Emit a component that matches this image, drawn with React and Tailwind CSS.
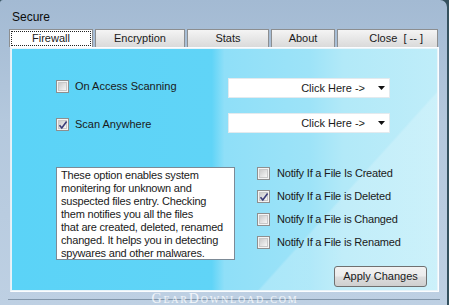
import React from 'react';

const TABS = [
  { label: 'Firewall', w: 'w-[84px]', selected: true },
  { label: 'Encryption', w: 'w-[90px]' },
  { label: 'Stats', w: 'w-[82px]' },
  { label: 'About', w: 'w-[64px]' },
  { label: 'Close  [ -- ]', w: 'w-[101px]', right: true },
];

const NOTIFY = [
  { label: 'Notify If a File Is Created', checked: false },
  { label: 'Notify If a File is Deleted', checked: true },
  { label: 'Notify If a File is Changed', checked: false },
  { label: 'Notify If a File is Renamed', checked: false },
];

function CheckBox({ checked }) {
  return (
    <span className="relative w-[13px] h-[13px] shrink-0 border border-[#8e8f8f] bg-[#f4f4f4] flex items-center justify-center">
      <span className="w-[9px] h-[9px] border border-[#c9c9c9] bg-[linear-gradient(135deg,#cbcbcb,#f6f6f6)]" />
      {checked && (
        <svg className="absolute left-[1px] top-[1px]" width="10" height="10" viewBox="0 0 10 10">
          <path d="M1.5 5.2 L3.8 8 L8.6 1.6" fill="none" stroke="#3a3c78" strokeWidth="1.6" />
        </svg>
      )}
    </span>
  );
}

function Dropdown() {
  return (
    <div className="w-[162px] h-[20px] bg-white border border-[#e3eaee] flex items-center justify-end pr-[4px]">
      <span className="text-[11px] text-[#1a1a1a] mr-[13px]">Click Here -&gt;</span>
      <svg width="7" height="4" viewBox="0 0 7 4">
        <path d="M0 0 H7 L3.5 4 Z" fill="#111" />
      </svg>
    </div>
  );
}

export default function App() {
  return (
    <div className="w-[449px] h-[305px] bg-[#35515e] overflow-hidden" style={{ fontFamily: '"Liberation Sans", Arial, sans-serif' }}>
      <div className="w-[447px] h-[305px] rounded-tr-[7px] rounded-tl-[3px] bg-[linear-gradient(180deg,#a3bad3_0%,#b4c8dd_40%,#bed0e3_100%)] flex flex-col">
        {/* title */}
        <div className="h-[29px] pl-[12px] pt-[10px] text-[12px] text-[#0c0c0c] leading-[14px]">Secure</div>

        {/* client */}
        <div className="ml-[8px] w-[434px] h-[273px] flex flex-col">
          {/* tabs */}
          <div className="flex h-[18px] pl-[1px] gap-[2px]">
            {TABS.map((t) => (
              <div
                key={t.label}
                className={`${t.w} h-[18px] border border-[#8c8e90] border-b-0 text-[11px] leading-[16px] text-[#1a1a1a] flex ${t.right ? 'justify-end pr-[14px]' : 'justify-center'} ${t.selected ? 'bg-white' : 'bg-[linear-gradient(180deg,#f4f4f4,#dadada)]'}`}
              >
                {t.selected ? (
                  <span className="m-[1px] w-full border border-dotted border-[#222] flex justify-center leading-[13px] whitespace-pre">
                    {t.label}
                  </span>
                ) : (
                  <span className="whitespace-pre">{t.label}</span>
                )}
              </div>
            ))}
          </div>

          {/* page */}
          <div className="ml-[2px] w-[429px] h-[245px] border border-[#fbfdff] border-l-[#e6eef5] p-[1px] bg-[#e8f4fa]">
            <div className="w-full h-full bg-[linear-gradient(132deg,rgba(255,255,255,0)_0%,rgba(255,255,255,0)_72%,rgba(255,255,255,0.2)_72.5%,rgba(255,255,255,0.2)_100%),linear-gradient(90deg,#5bd3f7_0%,#60d4f7_47%,#8fdff8_50%,#9de3f8_70%,#b2e9f8_78%,#bfedf9_100%)] text-[11px] text-[#1a1a1a] flex flex-col pt-[29px] pl-[44px]">
              <div className="flex items-center h-[20px]">
                <div className="w-[172px] flex items-center gap-[6px] pb-[4px]">
                  <CheckBox />
                  <span>On Access Scanning</span>
                </div>
                <Dropdown />
              </div>
              <div className="flex items-center h-[20px] mt-[15px]">
                <div className="w-[172px] flex items-center gap-[6px] pt-[2px]">
                  <CheckBox checked />
                  <span>Scan Anywhere</span>
                </div>
                <Dropdown />
              </div>

              <div className="flex items-start mt-[29px]">
                <div className="mt-[5px] w-[179px] h-[93px] bg-white border border-[#7c8a96] pl-[4px] pt-[1px] leading-[13px] tracking-[-0.2px] text-[#1a1a1a]">
                  These option enables system<br />
                  monitering for unknown and<br />
                  suspected files entry. Checking<br />
                  them notifies you all the files<br />
                  that are created, deleted, renamed<br />
                  changed. It helps you in detecting<br />
                  spywares and other malwares.
                </div>
                <div className="ml-[22px] flex flex-col">
                  {NOTIFY.map((n) => (
                    <div key={n.label} className="h-[23px] flex items-center gap-[7px] tracking-[-0.2px]">
                      <CheckBox checked={n.checked} />
                      <span>{n.label}</span>
                    </div>
                  ))}
                </div>
              </div>

              <div className="flex justify-end pr-[10px] mt-[6px]">
                <button className="w-[93px] h-[21px] rounded-[3px] border border-[#707070] bg-[linear-gradient(180deg,#f2f2f2_0%,#ebebeb_48%,#dddddd_52%,#cfcfcf_100%)] text-[11px] text-[#1a1a1a]">
                  Apply Changes
                </button>
              </div>
            </div>
          </div>

          {/* bottom edge with watermark */}
          <div className="relative h-[10px] flex items-start justify-center">
            <div className="absolute left-0 right-[2px] top-[7px] h-[1px] bg-[#8296aa]" />
            <span
              className="relative text-[14px] leading-[11px] mt-[1px] text-white/80 tracking-[1.8px] [font-variant:small-caps]"
              style={{ fontFamily: '"Liberation Serif", "Times New Roman", serif' }}
            >
              GearDownload.com
            </span>
          </div>
        </div>
      </div>
    </div>
  );
}
